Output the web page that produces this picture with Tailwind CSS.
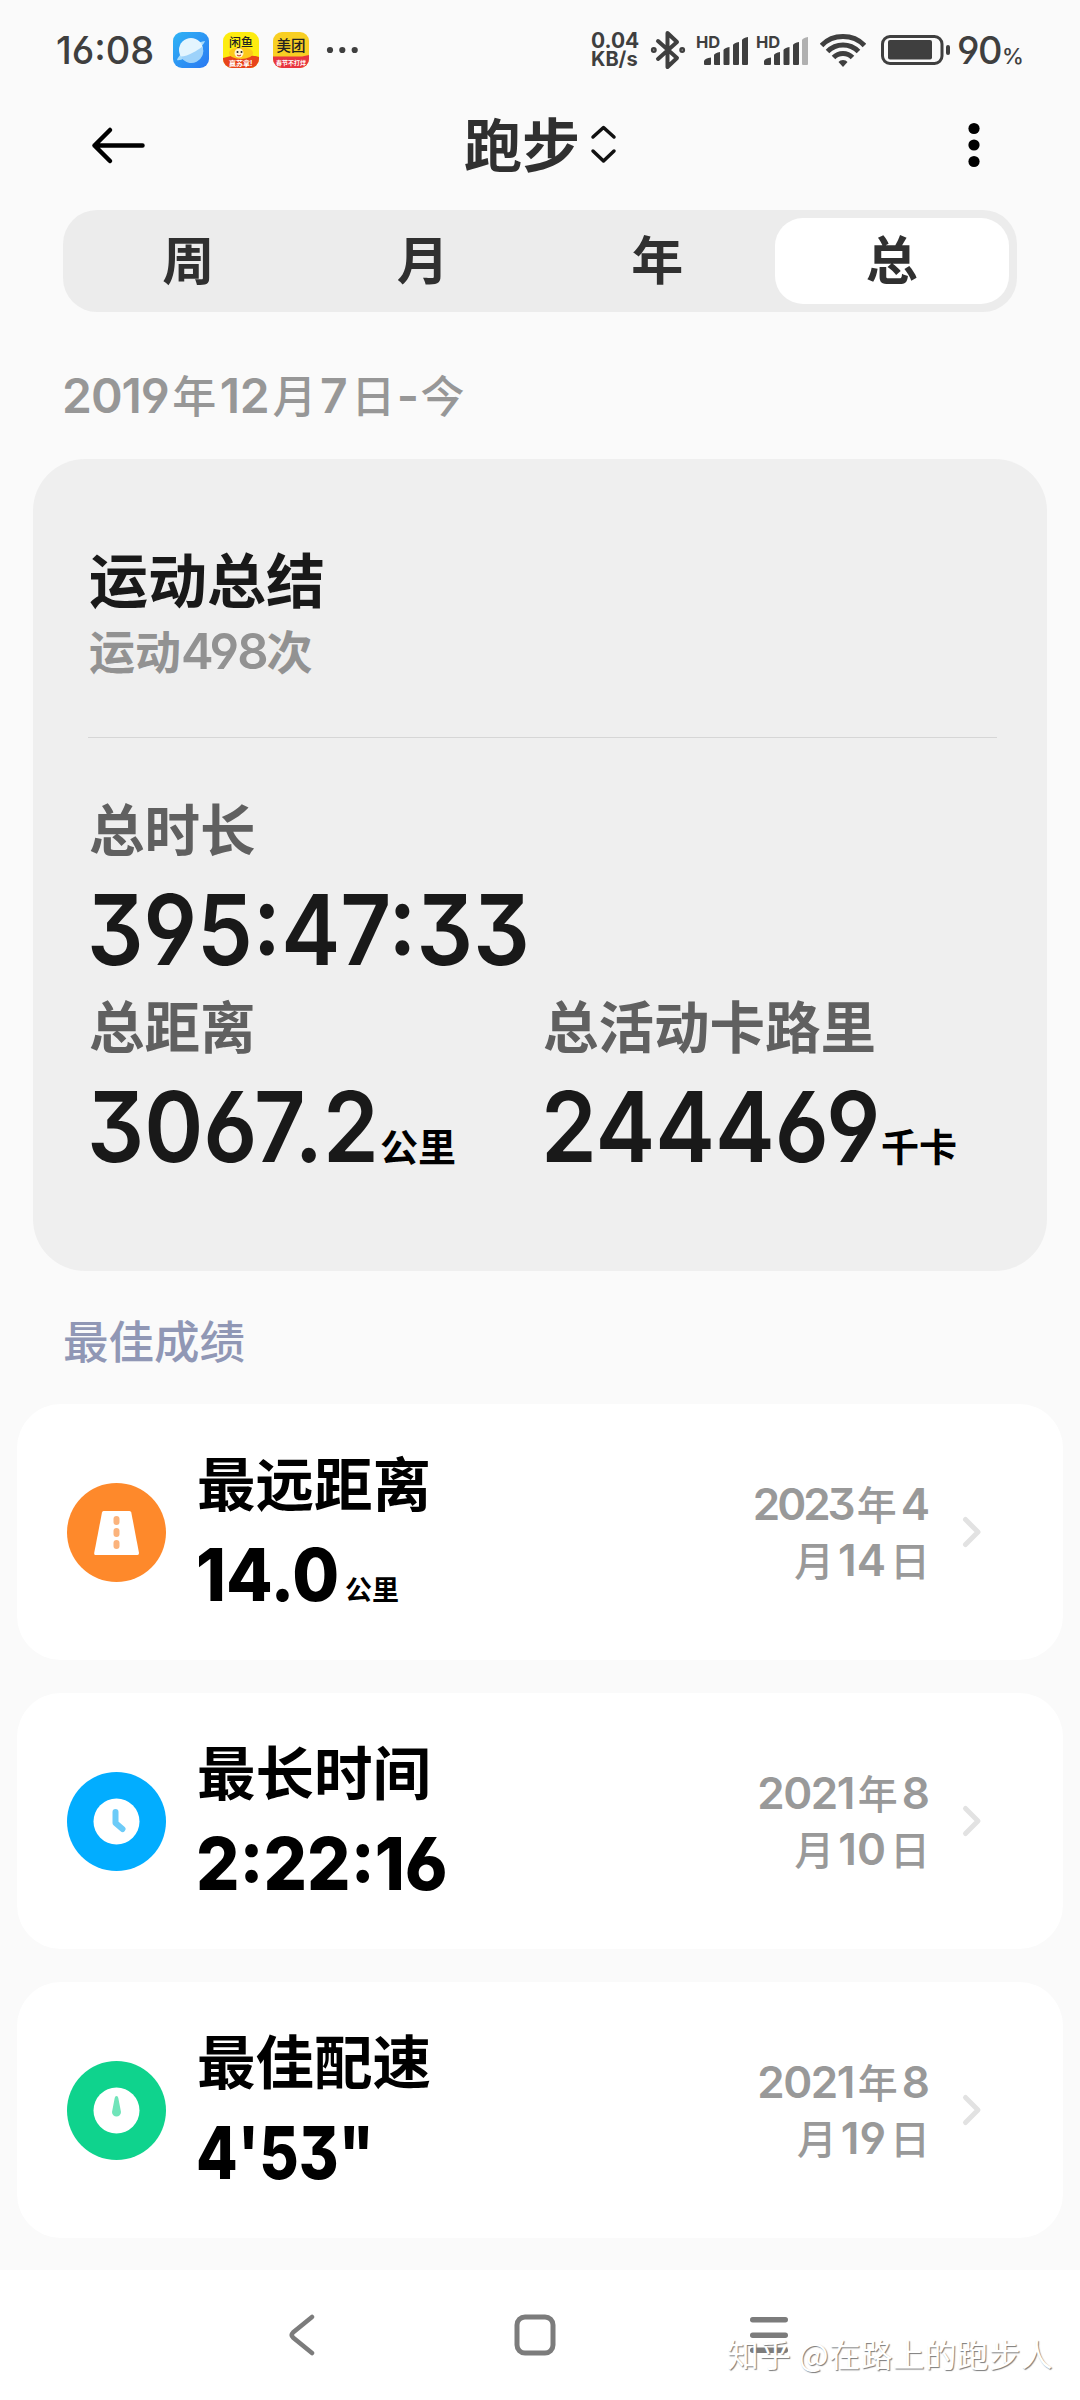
<!DOCTYPE html>
<html lang="zh-CN">
<head>
  <meta charset="UTF-8" />
  <meta name="viewport" content="width=device-width, initial-scale=1" />
  <title>跑步</title>
  <script src="https://cdn.jsdelivr.net/npm/@tailwindcss/browser@4"></script>
</head>
<body class="bg-[#fafafa]">
  <div class="relative w-[1080px] h-[2400px] overflow-hidden flex flex-col font-['Inter','Noto_Sans_CJK_SC',sans-serif] [font-feature-settings:'cv09','cv03','cv04'] whitespace-nowrap">

    <!-- Status bar -->
    <div class="h-[100px] shrink-0 flex items-center pl-[56px] text-[#3f3f3f]">
      <span class="w-[117px] text-[38px] leading-none font-medium">16:08</span>
      <svg class="w-9 h-9" viewBox="0 0 36 36">
        <defs><linearGradient id="sky" x1="0" y1="0" x2="1" y2="1"><stop offset="0" stop-color="#2fb4f5" /><stop offset="1" stop-color="#2a78f2" /></linearGradient></defs>
        <rect width="36" height="36" rx="9" fill="url(#sky)" />
        <path d="M4 28C9 30 30 16 32 9C27 9 6 20 4 28Z" fill="#a8dcfb" />
        <circle cx="18" cy="18" r="12" fill="#e4f5fe" />
        <path d="M7.500 24.500C14 25 25 18 29.500 14.500A12 12 0 0 1 8 25Z" fill="#9dd2fa" />
      </svg>
      <svg class="w-9 h-9 ml-[14px]" viewBox="0 0 36 36">
        <clipPath id="app"><rect width="36" height="36" rx="9" /></clipPath>
        <g clip-path="url(#app)">
          <rect width="36" height="36" fill="#fdec10" />
          <path d="M0 26Q18 20 36 25V36H0Z" fill="#e8431b" />
          <ellipse cx="18" cy="21" rx="12" ry="6" fill="#fdc91a" />
          <circle cx="16" cy="21" r="4.500" fill="#fff3d0" />
          <circle cx="14.500" cy="20" r="1" fill="#222" /><circle cx="18.500" cy="20" r="1" fill="#222" />
          <path d="M14 23q2 2 4 0" stroke="#c22" fill="none" />
          <text x="6" y="15" font-size="12" font-weight="500" fill="#222">闲鱼</text>
          <text x="6" y="33.500" font-size="7" font-weight="700" fill="#fff">赢苏拿!</text>
        </g>
      </svg>
      <svg class="w-9 h-9 ml-[14px]" viewBox="0 0 36 36">
        <g clip-path="url(#app)">
          <rect width="36" height="36" fill="#f8cf23" />
          <path d="M0 24.500H29L36 23V36H0Z" fill="#e8353f" />
          <text x="3.500" y="19" font-size="14.500" font-weight="500" fill="#222">美团</text>
          <text x="3" y="33" font-size="6" font-weight="700" fill="#fff">春节不打烊</text>
        </g>
      </svg>
      <svg class="w-8 h-2 ml-[17px]" viewBox="0 0 32 8" fill="currentColor">
        <circle cx="4" cy="4" r="3.100" /><circle cx="16.300" cy="4" r="3.100" /><circle cx="28.700" cy="4" r="3.100" />
      </svg>

      <div class="ml-[233px] w-[59px] text-[21px] leading-[19px] font-bold">
        <div>0.04</div>
        <div class="text-[20px]">KB/s</div>
      </div>
      <svg class="w-9 h-10" viewBox="0 0 36 40" fill="none" stroke="currentColor" stroke-width="4" stroke-linejoin="round" stroke-linecap="round">
        <path d="M8 11L27 28L17.500 37V3L27 12L8 29" />
        <circle cx="3.800" cy="20" r="1.200" stroke-width="3.500" /><circle cx="32.200" cy="20" r="1.200" stroke-width="3.500" />
      </svg>
      <svg class="w-[51px] h-8 ml-[11px] overflow-visible" viewBox="0 0 51 32" fill="currentColor">
        <text x="-1" y="13.500" font-size="16.500" font-weight="700">HD</text>
        <path d="M7 30v-3q1-3 7-3.500v6.500q0 1-1 1h-5q-1 0-1-1ZM17 21q1-2 6-3v13h-5q-1 0-1-1ZM26.500 16q1-2 6-3v17q0 1-1 1h-4q-1 0-1-1ZM36 11q1-2 6-3v22q0 1-1 1h-4q-1 0-1-1ZM45 6q1-2 6-3v27q0 1-1 1h-4q-1 0-1-1Z" />
      </svg>
      <svg class="w-[51px] h-8 ml-[9px] overflow-visible" viewBox="0 0 51 32" fill="currentColor">
        <text x="-1" y="13.500" font-size="16.500" font-weight="700">HD</text>
        <path d="M7 30v-3q1-3 7-3.500v6.500q0 1-1 1h-5q-1 0-1-1ZM17 21q1-2 6-3v13h-5q-1 0-1-1ZM26.500 16q1-2 6-3v17q0 1-1 1h-4q-1 0-1-1ZM36 11q1-2 6-3v22q0 1-1 1h-4q-1 0-1-1Z" />
        <path d="M45 6q1-2 6-3v27q0 1-1 1h-4q-1 0-1-1Z" fill="#b0b0b0" />
      </svg>
      <svg class="w-[46px] h-[34px] ml-[12px]" viewBox="0 0 46 34" fill="none" stroke="currentColor" stroke-width="5">
        <path d="M1.500 12.500Q10 3.500 23 3.500T44.500 12.500" />
        <path d="M7.500 18.500Q14 12 23 12T38.500 18.500" />
        <path d="M13.500 24.500Q17.500 20.500 23 20.500T32.500 24.500" />
        <path d="M23 27q3 0 4.500 2L23 34L18.500 29Q20 27 23 27Z" fill="currentColor" stroke="none" />
      </svg>
      <svg class="w-[70px] h-[30px] ml-[15px]" viewBox="0 0 70 30" fill="currentColor">
        <rect x="1.500" y="1.500" width="59.500" height="27" rx="7.500" fill="none" stroke="currentColor" stroke-width="3" />
        <rect x="7" y="5" width="44" height="19.500" rx="2" />
        <rect x="65" y="10" width="4" height="10" rx="2" />
      </svg>
      <span class="ml-[6px] text-[38px] leading-none font-medium tracking-[-1.500px] flex items-baseline">90<span class="ml-px text-[22px]">%</span></span>
    </div>

    <!-- Header -->
    <div class="h-[90px] shrink-0 flex items-center pl-[91px] pr-[100px]">
      <svg class="w-14 h-10" viewBox="0 0 56 40" fill="none" stroke="#000" stroke-width="4.500" stroke-linecap="round" stroke-linejoin="round">
        <path d="M51.500 20.500H3.500M19 5L3.500 20.500L19 36" />
      </svg>
      <h1 class="ml-[317px] pt-px text-[58px] leading-none font-bold text-[#303030] w-[125px]">跑步</h1>
      <svg class="w-7 h-10" viewBox="0 0 28 40" fill="none" stroke="#111" stroke-width="3.500" stroke-linecap="round" stroke-linejoin="round">
        <path d="M4 12L14.500 2.500L25 12M4 26L14.500 36L25 26" />
      </svg>
      <svg class="w-3 h-[46px] ml-auto" viewBox="0 0 12 46">
        <circle cx="6" cy="6.500" r="5.600" /><circle cx="6" cy="23" r="5.600" /><circle cx="6" cy="39.500" r="5.600" />
      </svg>
    </div>

    <!-- Period tabs -->
    <div class="mt-5 mx-[63px] h-[102px] shrink-0 p-2 grid grid-cols-4 rounded-[34px] bg-[#ececec] text-[52px] leading-[88px] font-bold text-[#303030] text-center">
      <div>周</div>
      <div>月</div>
      <div>年</div>
      <div class="h-[86px] bg-white rounded-[28px]">总</div>
    </div>

    <div class="mt-[54px] pl-[62px] h-[60px] shrink-0 flex items-baseline gap-[3.500px] leading-[60px] text-[44px] font-medium text-[#979797]">
      <span class="text-[48px] font-semibold tracking-[-1px]">2019</span><span>年</span><span class="text-[48px] font-semibold tracking-[-0.500px]">12</span><span>月</span><span class="text-[48px] font-semibold">7</span><span>日</span><span class="-mx-[2px] text-[48px] font-semibold">-</span><span>今</span>
    </div>

    <!-- Summary -->
    <div class="mt-[33px] ml-[33px] w-[1014px] h-[812px] shrink-0 pt-[88px] pl-[56px] pr-[50px] rounded-[52px] bg-[#efefef]">
      <div class="text-[59px] leading-[70px] font-bold text-[#191919]">运动总结</div>
      <div class="text-[46px] leading-[70px] font-bold text-[#929292]">运动<span class="text-[49px] font-semibold tracking-[-2px]">498</span>次</div>
      <div class="mt-[50px] -ml-px h-px bg-[#d6d6d6]"></div>
      <div class="mt-[58px] text-[55.500px] leading-[70px] font-bold text-[#606060]">总时长</div>
      <div class="mt-1 -ml-[2px] h-[120px] text-[98px] leading-[120px] font-semibold text-[#191919]"><span class="inline-block origin-left scale-x-[0.905]">395:47:33</span></div>
      <div class="mt-[3px] grid grid-cols-[454px_1fr]">
        <div>
          <div class="text-[55.500px] leading-[70px] font-bold text-[#606060]">总距离</div>
          <div class="mt-1 -ml-[2px] flex items-baseline h-[120px] text-[98px] leading-[120px] font-semibold text-[#191919]"><span class="w-[293px]"><span class="inline-block origin-left scale-x-[0.915]">3067.2</span></span><span class="relative -top-px text-[38px] font-bold text-black">公里</span></div>
        </div>
        <div>
          <div class="text-[55.500px] leading-[70px] font-bold text-[#606060]">总活动卡路里</div>
          <div class="mt-1 -ml-[2px] flex items-baseline h-[120px] text-[98px] leading-[120px] font-semibold text-[#191919]"><span class="w-[340px]"><span class="inline-block origin-left scale-x-[0.915]">244469</span></span><span class="relative -top-px text-[38px] font-bold text-black">千卡</span></div>
        </div>
      </div>
    </div>

    <div class="mt-[42px] pl-[63px] h-[60px] leading-[60px] shrink-0 text-[45.500px] font-medium text-[#9097b5]">最佳成绩</div>

    <!-- Best results -->
    <div class="mt-[31px] mx-[17px] shrink-0 flex flex-col gap-[33px]">
      <div class="h-[256px] flex items-center pl-[50px] pr-[78px] rounded-[44px] bg-white">
        <svg class="w-[99px] h-[99px]" viewBox="0 0 99 99">
          <circle cx="49.500" cy="49.500" r="49.500" fill="#fe892b" />
          <path d="M36.500 28H62.500Q64 28 64.300 29.500L72 70Q72 72 70.500 72H28.500Q27 72 27.200 70L35 29.500Q35.300 28 36.500 28Z" fill="#fff" />
          <g fill="#fbb37c"><rect x="46.500" y="33" width="6" height="9" rx="3" /><rect x="46.500" y="45" width="6" height="9" rx="3" /><rect x="46.500" y="57" width="6" height="9" rx="3" /></g>
        </svg>
        <div class="ml-[31px]">
          <div class="text-[58.500px] leading-[71px] font-bold">最远距离</div>
          <div class="mt-[15px] -ml-px flex items-baseline h-20 text-[73px] leading-[80px] font-extrabold"><span class="w-[149px]"><span class="inline-block origin-left scale-x-[0.93]">14.0</span></span><span class="relative -top-px text-[27px] font-bold">公里</span></div>
        </div>
        <div class="ml-auto text-[40px] leading-[56px] font-medium text-[#999999]">
          <div class="h-14 flex items-baseline justify-end gap-[4px]"><span class="text-[44px] font-semibold tracking-[-3px]">2023</span><span>年</span><span class="text-[44px] font-semibold">4</span></div>
          <div class="h-14 flex items-baseline justify-end gap-[4px]"><span>月</span><span class="text-[44px] font-semibold">14</span><span>日</span></div>
        </div>
        <svg class="w-6 h-9 ml-[31px]" viewBox="0 0 24 36" fill="none" stroke="#e2e2e2" stroke-width="5" stroke-linecap="round" stroke-linejoin="round"><path d="M4.500 5.500L17 18L4.500 30.500" /></svg>
      </div>

      <div class="h-[256px] flex items-center pl-[50px] pr-[78px] rounded-[44px] bg-white">
        <svg class="w-[99px] h-[99px]" viewBox="0 0 99 99">
          <circle cx="49.500" cy="49.500" r="49.500" fill="#02adff" />
          <circle cx="49.500" cy="49.500" r="23" fill="#fff" />
          <path d="M48.500 40V51L55.500 57" fill="none" stroke="#6ccbf8" stroke-width="6" stroke-linecap="round" stroke-linejoin="round" />
        </svg>
        <div class="ml-[31px]">
          <div class="text-[58.500px] leading-[71px] font-bold">最长时间</div>
          <div class="mt-[15px] -ml-px h-20 text-[73px] leading-[80px] font-extrabold"><span class="inline-block origin-left scale-x-[0.935]">2:22:16</span></div>
        </div>
        <div class="ml-auto text-[40px] leading-[56px] font-medium text-[#999999]">
          <div class="h-14 flex items-baseline justify-end gap-[4px]"><span class="text-[44px] font-semibold tracking-[-1.500px]">2021</span><span>年</span><span class="text-[44px] font-semibold">8</span></div>
          <div class="h-14 flex items-baseline justify-end gap-[4px]"><span>月</span><span class="text-[44px] font-semibold">10</span><span>日</span></div>
        </div>
        <svg class="w-6 h-9 ml-[31px]" viewBox="0 0 24 36" fill="none" stroke="#e2e2e2" stroke-width="5" stroke-linecap="round" stroke-linejoin="round"><path d="M4.500 5.500L17 18L4.500 30.500" /></svg>
      </div>

      <div class="h-[256px] flex items-center pl-[50px] pr-[78px] rounded-[44px] bg-white">
        <svg class="w-[99px] h-[99px]" viewBox="0 0 99 99">
          <circle cx="49.500" cy="49.500" r="49.500" fill="#0fd38d" />
          <circle cx="49.500" cy="49.500" r="23" fill="#fff" />
          <path d="M49.500 35Q51 35 51.300 37L54 51A4.500 4.500 0 1 1 45 51L47.700 37Q48 35 49.500 35Z" fill="#70e4b9" />
        </svg>
        <div class="ml-[31px]">
          <div class="text-[58.500px] leading-[71px] font-bold">最佳配速</div>
          <div class="mt-[15px] -ml-px h-20 text-[73px] leading-[80px] font-extrabold"><span class="inline-block origin-left scale-x-[0.83]">4'53"</span></div>
        </div>
        <div class="ml-auto text-[40px] leading-[56px] font-medium text-[#999999]">
          <div class="h-14 flex items-baseline justify-end gap-[4px]"><span class="text-[44px] font-semibold tracking-[-1.500px]">2021</span><span>年</span><span class="text-[44px] font-semibold">8</span></div>
          <div class="h-14 flex items-baseline justify-end gap-[4px]"><span>月</span><span class="text-[44px] font-semibold">19</span><span>日</span></div>
        </div>
        <svg class="w-6 h-9 ml-[31px]" viewBox="0 0 24 36" fill="none" stroke="#e2e2e2" stroke-width="5" stroke-linecap="round" stroke-linejoin="round"><path d="M4.500 5.500L17 18L4.500 30.500" /></svg>
      </div>
    </div>

    <!-- System navigation -->
    <div class="mt-auto h-[130px] shrink-0 flex items-center pl-[287px] bg-white">
      <svg class="w-[30px] h-[42px]" viewBox="0 0 30 42" fill="none" stroke="#7c7c7c" stroke-width="4.500" stroke-linecap="round">
        <path d="M25 3L6 18.500Q3.500 21 6 23.500L25 39" />
      </svg>
      <svg class="w-[42px] h-[42px] ml-[197px]" viewBox="0 0 42 42" fill="none" stroke="#7c7c7c" stroke-width="5">
        <rect x="3" y="3" width="36" height="36" rx="8" />
      </svg>
      <svg class="w-[38px] h-[36px] ml-[194px]" viewBox="0 0 38 36" fill="#7c7c7c">
        <rect y="0" width="38" height="5.500" rx="2.700" /><rect y="15.500" width="38" height="5.500" rx="2.700" /><rect y="30.500" width="38" height="5.500" rx="2.700" />
      </svg>
    </div>

    <!-- Watermark -->
    <div class="absolute right-[27px] top-[2333px] text-[31.500px] leading-10 tracking-[0.500px] font-['Noto_Sans_CJK_SC',sans-serif] text-white [text-shadow:1px_1px_1px_#7a7a7a]">知乎 @在路上的跑步人</div>
  </div>
</body>
</html>
